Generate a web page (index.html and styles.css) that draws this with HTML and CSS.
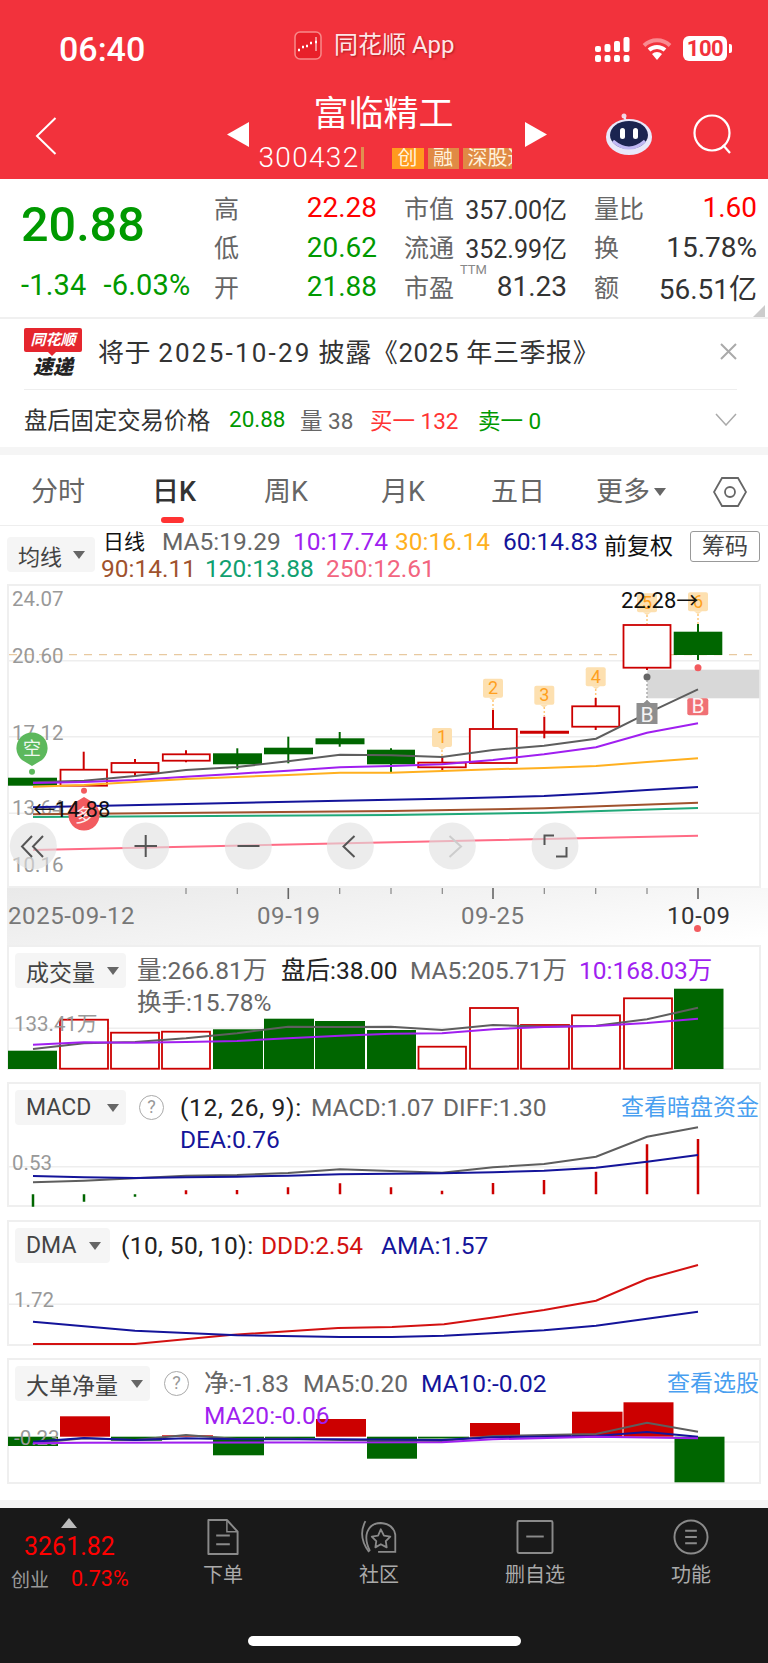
FILE: index.html
```html
<!DOCTYPE html>
<html lang="zh">
<head>
<meta charset="utf-8">
<title>富临精工</title>
<link rel="stylesheet" href="styles.css">
</head>
<body>
<div class="page">
  <header class="header">
    <div class="status">
      <span class="time">06:40</span>
      <div class="applabel">
        <svg class="applogo" viewBox="0 0 28 29"><rect x="1" y="1" width="26" height="27" rx="5" fill="#e8202a" stroke="#f78a8a" stroke-width="1.5"/><path d="M4 19h2M8 16h2M12 15h2M16 12h2M21 11h2" stroke="#fff" stroke-width="2.4"/><path d="M22 6v14" stroke="#fff" stroke-width="1"/></svg>
        <span class="appname">同花顺 App</span>
      </div>
      <div class="sysicons">
        <svg class="signal" viewBox="0 0 35 25"><g fill="#fff"><rect x="0" y="18" width="6" height="7" rx="2"/><rect x="9.500" y="18" width="6" height="7" rx="2"/><rect x="19" y="18" width="6" height="7" rx="2"/><rect x="28.500" y="18" width="6" height="7" rx="2"/><rect x="0" y="9" width="6" height="6" rx="2"/><rect x="9.500" y="7" width="6" height="8" rx="2"/><rect x="19" y="4" width="6" height="11" rx="2"/><rect x="28.500" y="0" width="6" height="15" rx="2"/></g></svg>
        <svg class="wifi" viewBox="0 0 30 24"><path d="M2 9.500a19 19 0 0 1 26 0" fill="none" stroke="#f98b91" stroke-width="4"/><path d="M7 14a12 12 0 0 1 16 0" fill="none" stroke="#fff" stroke-width="4"/><path d="M15 24l-5-6a7 7 0 0 1 10 0z" fill="#fff"/></svg>
        <div class="battery"><span class="batterytext">100</span></div>
      </div>
    </div>
    <div class="nav">
      <svg class="back" viewBox="0 0 22 38"><path d="M20.500 1L2 19l18.500 18" fill="none" stroke="#fff" stroke-width="2"/></svg>
      <svg class="tri-l" viewBox="0 0 22 25"><path d="M22 0v25L0 12.500z" fill="#fff"/></svg>
      <div class="navcenter">
        <div class="title">富临精工</div>
        <div class="coderow">
          <span class="code">300432</span><span class="codebar"></span>
          <span class="tag tag-a">创</span><span class="tag tag-b">融</span><span class="tag tag-c">深股通</span>
        </div>
      </div>
      <svg class="tri-r" viewBox="0 0 22 25"><path d="M0 0v25l22-12.500z" fill="#fff"/></svg>
      <svg class="robot" viewBox="0 0 48 42"><circle cx="19" cy="3" r="2.500" fill="#f4d4e4"/><path d="M19 4q1 3 4 4" stroke="#e8e8f8" stroke-width="2" fill="none"/><ellipse cx="24" cy="24" rx="23" ry="18" fill="#e8e8fa"/><ellipse cx="24" cy="22" rx="19" ry="14" fill="#1b2450"/><path d="M8 28q16 14 32 0" stroke="#c0b8f4" stroke-width="3" fill="none"/><rect x="15" y="15" width="5" height="11" rx="2.500" fill="#fff"/><rect x="28" y="15" width="5" height="11" rx="2.500" fill="#fff"/></svg>
      <svg class="search" viewBox="0 0 40 40"><circle cx="19" cy="19" r="17.500" fill="none" stroke="#fff" stroke-width="2.200"/><path d="M30 31l7 8" stroke="#fff" stroke-width="2.200"/></svg>
    </div>
  </header>

  <section class="quote">
    <div class="price">
      <div class="bigprice">20.88</div>
      <div class="change"><span>-1.34</span><span>-6.03%</span></div>
    </div>
    <div class="stats">
      <div class="stat"><span class="lab">高</span><span class="val up">22.28</span></div>
      <div class="stat"><span class="lab">市值</span><span class="val small dark">357.00亿</span></div>
      <div class="stat"><span class="lab">量比</span><span class="val up">1.60</span></div>
      <div class="stat"><span class="lab">低</span><span class="val down">20.62</span></div>
      <div class="stat"><span class="lab">流通</span><span class="val small dark">352.99亿</span></div>
      <div class="stat"><span class="lab">换</span><span class="val dark">15.78%</span></div>
      <div class="stat"><span class="lab">开</span><span class="val down">21.88</span></div>
      <div class="stat"><span class="lab">市盈<span class="ttm">TTM</span></span><span class="val dark">81.23</span></div>
      <div class="stat"><span class="lab">额</span><span class="val dark">56.51亿</span></div>
    </div>
    <span class="corner"></span>
  </section>

  <section class="noticebox">
    <div class="notice">
      <div class="nlogo"><div class="nlogo-tag">同花顺</div><div class="nlogo-sub">速递</div></div>
      <div class="ntext">将于 <span class="nnum">2025-10-29</span> 披露《2025 年三季报》</div>
      <svg class="nclose" viewBox="0 0 17 17"><path d="M1 1l15 15M16 1L1 16" stroke="#aaa" stroke-width="2"/></svg>
    </div>
    <div class="after">
      <span class="after-lab">盘后固定交易价格</span>
      <span class="after-price">20.88</span>
      <span class="after-vol">量 38</span>
      <span class="after-buy">买一 132</span>
      <span class="after-sell">卖一 0</span>
      <svg class="after-more" viewBox="0 0 22 13"><path d="M1 1l10 11L21 1" fill="none" stroke="#aaa" stroke-width="1.500"/></svg>
    </div>
  </section>

  <nav class="tabs">
    <span class="tab t1">分时</span>
    <span class="tab t2 active">日K</span>
    <span class="tab t3">周K</span>
    <span class="tab t4">月K</span>
    <span class="tab t5">五日</span>
    <span class="tab t6">更多<i class="caret"></i></span>
    <svg class="hex" viewBox="0 0 34 30"><path d="M9 1h16l8 14-8 14H9L1 15z" fill="none" stroke="#666" stroke-width="1.800"/><circle cx="17" cy="15" r="5" fill="none" stroke="#666" stroke-width="1.800"/></svg>
  </nav>

  <section class="klegend">
    <div class="pill pill-ma"><span>均线</span><i class="caret"></i></div>
    <div class="klines">
      <div class="krow">
        <span class="kname">日线</span><span class="gray">MA5:19.29</span><span class="purple">10:17.74</span><span class="orange">30:16.14</span><span class="navy">60:14.83</span>
      </div>
      <div class="krow krow2">
        <span class="brown">90:14.11</span><span class="teal">120:13.88</span><span class="pink">250:12.61</span>
      </div>
    </div>
    <span class="fq">前复权</span>
    <span class="chip">筹码</span>
  </section>

  <section class="panel kpanel">
    <svg class="chart" viewBox="9 586 750 300">
      <path class="grid" d="M9 660.700H759M9 736.700H759M9 813.300H759"/>
      <path class="dash" d="M9 654.700H759"/>
      <text class="axis" x="12" y="606">24.07</text>
      <text class="axis" x="12" y="663">20.60</text>
      <text class="axis" x="12" y="740">17.12</text>
      <text class="axis" x="12" y="815">13.64</text>
      <text class="axis" x="12" y="872">10.16</text>
      <rect x="647.300" y="669.700" width="112" height="28.600" fill="#d8d8d8"/>

      <g class="gc">
        <rect x="8" y="777.700" width="49" height="8"/><rect x="213" y="753.300" width="49" height="11"/><path class="gw" d="M237.300 748.300V769.300"/>
        <rect x="264" y="747.700" width="49" height="6.600"/><path class="gw" d="M288.300 736.700V763.300"/>
        <rect x="315.500" y="738.300" width="49" height="6"/><path class="gw" d="M339.700 732V746.700"/>
        <rect x="367" y="749.700" width="48" height="14.600"/><path class="gw" d="M391 748.300V772.300"/>
        <rect x="673.700" y="631.700" width="48.600" height="23.300"/><path class="gw" d="M698 624V660"/>
      </g>
      <g class="rc">
        <path d="M83.700 751.700V769.300"/><rect x="60.500" y="769.700" width="46.500" height="16"/>
        <path d="M135 759V762.700M135 772.300V776"/><rect x="111.500" y="763" width="47" height="9.300"/>
        <path d="M186 750.300V754M186 760.700V762.300"/><rect x="162.800" y="754.300" width="47" height="6.400"/>
        <path d="M442.300 756.700V762.300M442.300 767.300V771"/><rect x="418.200" y="762.600" width="47.600" height="4.700"/>
        <path d="M493 710V728.700"/><rect x="469.800" y="729" width="47" height="34"/>
        <path class="thick" d="M520 732.300H569"/><path d="M544.300 716.700V738.300"/>
        <path d="M595.700 698V706M595.700 726.700V730"/><rect x="572.200" y="706.300" width="47" height="20.400"/>
        <path d="M647 667.700V670"/><rect x="623.500" y="625" width="47" height="42.700"/>
      </g>

      <polyline class="ln ma5" points="33,782.300 84,780.700 135,776 186,770 237,767 288,761.300 340,754.700 391,755.300 442,757 493,750 544,745.700 596,738.700 647,713.300 698,689.300"/>
      <polyline class="ln ma10" points="33,783 84,782 135,780 186,776.700 237,773.700 288,770.700 340,767.300 391,766 442,764.300 493,760 544,754.300 596,747.300 647,732.700 698,723.300"/>
      <polyline class="ln ma30" points="33,786.700 84,785 186,779 288,775 340,772.700 391,772.700 442,771 493,769.300 544,768 596,766 647,762 698,758.300"/>
      <polyline class="ln ma60" points="33,807.300 186,804 340,800.700 442,798.700 544,796 596,793.300 647,790 698,787"/>
      <polyline class="ln ma90" points="33,814.300 391,811 544,808.300 698,802.700"/>
      <polyline class="ln ma120" points="33,817 391,815 544,812.700 698,808"/>
      <polyline class="ln ma250" points="33,850 346,843.300 698,835.700"/>

      <g class="marks">
        <g><rect x="432" y="728" width="20" height="19" rx="2"/><path d="M438 747h8l-4 3z"/><path class="dot-l" d="M442 750V756"/><text x="442" y="743">1</text></g>
        <g><rect x="483" y="678.700" width="20" height="19" rx="2"/><path d="M489 697.700h8l-4 3z"/><path class="dot-l" d="M493 700V710"/><text x="493" y="694">2</text></g>
        <g><rect x="534.300" y="685.700" width="20" height="19" rx="2"/><path d="M540 704.700h8l-4 3z"/><path class="dot-l" d="M544.300 707V716"/><text x="544.300" y="701">3</text></g>
        <g><rect x="585.700" y="667.300" width="20" height="19" rx="2"/><path d="M592 686.300h8l-4 3z"/><path class="dot-l" d="M595.700 689V698"/><text x="595.700" y="682.500">4</text></g>
        <g><rect x="637" y="593.300" width="20" height="19" rx="2"/><path d="M643 612.300h8l-4 3z"/><path class="dot-l" d="M647 615V624"/><text x="647" y="608.500">5</text></g>
        <g><rect x="688" y="592.300" width="20" height="19" rx="2"/><path d="M694 611.300h8l-4 3z"/><path class="dot-l" d="M698 614V624"/><text x="698" y="607.500">6</text></g>
      </g>

      <circle cx="647" cy="677" r="3.500" fill="#666"/>
      <path d="M647 680V702" stroke="#999" stroke-dasharray="2 2" stroke-width="1.200"/>
      <path d="M636.500 703h7l3.500-3 3.500 3h7v21h-21z" fill="#8e8e8e"/>
      <text class="btag" x="647" y="722">B</text>
      <circle cx="698" cy="667.700" r="3.500" fill="#f25b5f"/>
      <rect x="687.300" y="698.300" width="21" height="17" rx="2" fill="#f07075"/>
      <text class="btag" x="698" y="713">B</text>

      <path d="M32 766L22 760a15.600 15.600 0 1 1 20 0z" fill="#5cb85c"/>
      <circle cx="32" cy="771.700" r="3" fill="#5cb85c"/>
      <text class="pintext" x="32" y="755">空</text>
      <circle cx="84" cy="790.700" r="3" fill="#f25b5f"/>
      <path d="M84 797L94 803a15.600 15.600 0 1 1-20 0z" fill="#f25b5f"/>
      <text class="pintext" x="84" y="822">多</text>

      <text class="extreme" x="33" y="817">←14.88</text>
      <text class="extreme" x="621" y="608">22.28→</text>

      <g class="ctl">
        <circle cx="33.300" cy="846" r="23.500"/><circle cx="145.700" cy="846" r="23.500"/><circle cx="248.300" cy="846" r="23.500"/><circle cx="350.300" cy="846" r="23.500"/><circle cx="452.300" cy="846" r="23.500"/><circle cx="555" cy="846" r="23.500"/>
      </g>
      <g class="ctlicon">
        <path d="M32 836L22 846.500 32 857M43 836L33 846.500 43 857"/>
        <path d="M134.500 846H157M145.700 835V857"/>
        <path d="M237.500 846H259.500"/>
        <path d="M354.500 836L343.500 846.500 354.500 857"/>
        <path class="off" d="M449.500 836L461 846.500 449.500 857"/>
        <path d="M554 835.500H544.500V845M556 856.500H566.500V847"/>
      </g>
    </svg>
  </section>

  <section class="timeaxis">
    <svg class="ticks" viewBox="0 0 768 14"><path d="M186 0v6M237.300 0v6M339.700 0v6M391 0v6M442.300 0v6M544.300 0v6M595.700 0v6M647 0v6" stroke="#888" stroke-width="1.200"/><path d="M288.300 0v11M493 0v11M698 0v11" stroke="#666" stroke-width="1.600"/></svg>
    <div class="dates">
      <span class="date d1">2025-09-12</span>
      <span class="date d2">09-19</span>
      <span class="date d3">09-25</span>
      <span class="date d4">10-09</span>
    </div>
    <i class="reddot"></i>
  </section>

  <section class="panel sub h125">
    <svg class="chart" viewBox="9 947 750 121">
      <path class="grid" d="M9 1028.300H759"/>
      <g class="gb">
        <rect x="8" y="1050.700" width="49" height="18.300"/><rect x="213" y="1029.300" width="50" height="39.700"/><rect x="264" y="1018.700" width="50" height="50.300"/><rect x="315" y="1021" width="50" height="48"/><rect x="367" y="1030" width="49" height="39"/><rect x="674" y="988.700" width="49.500" height="80.300"/>
      </g>
      <g class="rb">
        <rect x="60" y="1019.700" width="48" height="49"/><rect x="111" y="1032.700" width="48" height="36"/><rect x="162" y="1031.700" width="48" height="37"/><rect x="418.500" y="1046.700" width="47.500" height="22"/><rect x="470" y="1008" width="48" height="60.700"/><rect x="521" y="1025" width="48" height="43.700"/><rect x="572" y="1015.300" width="48" height="53.400"/><rect x="624" y="998.300" width="48" height="70.400"/>
      </g>
      <text class="axis" x="14" y="1031">133.41万</text>
      <polyline class="ln ma5" points="33,1049 84,1043.300 135,1042 186,1038.300 237,1033.300 288,1026.700 340,1027 391,1026.700 442,1030 493,1025 544,1026.700 596,1025.700 647,1019.300 698,1007.700"/>
      <polyline class="ln ma10" points="33,1044.700 84,1042.300 135,1042.700 186,1042 237,1041 288,1038.300 340,1035.700 391,1033.700 442,1033.300 493,1029.300 544,1027 596,1026 647,1023 698,1018.700"/>
    </svg>
    <div class="plegend">
      <div class="pill pill-vol"><span>成交量</span><i class="caret"></i></div>
      <div class="pvalues pv-vol">
        <div class="prow"><span class="gray">量:266.81万</span><span class="dark2">盘后:38.00</span><span class="gray">MA5:205.71万</span><span class="purple">10:168.03万</span></div>
        <div class="prow"><span class="gray">换手:15.78%</span></div>
      </div>
    </div>
  </section>

  <section class="panel sub h125 gap13">
    <svg class="chart" viewBox="9 1084 750 121">
      <path class="grid" d="M9 1166.700H759"/>
      <text class="axis" x="12" y="1170">0.53</text>
      <g class="mg"><path d="M33 1194.300V1206.700M84 1194.300V1201.700M135 1194.300V1196.700"/></g>
      <g class="mr"><path d="M186 1194.300V1190.300M237 1194.300V1190M288 1194.300V1187.300M340 1194.300V1183.300M391 1194.300V1187.300M442 1194.300V1190.700M493 1194.300V1183M544 1194.300V1180M596 1194.300V1171.700M647 1194.300V1144.300M698 1194.300V1139"/></g>
      <polyline class="ln ma5" points="33,1182.300 84,1180.700 135,1178.300 186,1175.700 237,1175 288,1173 340,1169.300 391,1171 442,1172.700 493,1167.300 544,1164 596,1156.700 647,1136.700 698,1127.300"/>
      <polyline class="ln ma60" points="33,1176 84,1177.300 135,1178 186,1177.300 237,1176.700 288,1175.700 340,1174.300 391,1173.700 442,1173.300 493,1172.300 544,1170.700 596,1167.700 647,1161.700 698,1155"/>
    </svg>
    <div class="plegend">
      <div class="pill pill-vol"><span>MACD</span><i class="caret"></i></div>
      <span class="help help-macd">?</span>
      <div class="pvalues pv-macd">
        <div class="prow"><span class="dark2">(12, 26, 9):</span><span class="gray">MACD:1.07</span><span class="gray">DIFF:1.30</span></div>
        <div class="prow"><span class="navy">DEA:0.76</span></div>
      </div>
    </div>
    <a class="plink">查看暗盘资金</a>
  </section>

  <section class="panel sub h126 gap13">
    <svg class="chart" viewBox="9 1222 750 122">
      <path class="grid" d="M9 1304.300H759"/>
      <text class="axis" x="14" y="1306.500">1.72</text>
      <polyline class="ln redl" points="33,1344 135,1344 230,1335 338,1328 392,1327 444,1324.300 495,1317.300 544,1310 596,1300.700 647,1279 698,1265"/>
      <polyline class="ln ma60" points="33,1321.700 135,1330.700 237,1335.300 340,1337 392,1337 444,1335.700 544,1330.300 596,1325.700 647,1318.700 698,1311.700"/>
    </svg>
    <div class="plegend">
      <div class="pill pill-dma"><span>DMA</span><i class="caret"></i></div>
      <div class="pvalues pv-dma">
        <div class="prow"><span class="dark2">(10, 50, 10):</span><span class="red">DDD:2.54</span><span class="navy">AMA:1.57</span></div>
      </div>
    </div>
  </section>

  <section class="panel sub h126 gap12">
    <svg class="chart" viewBox="9 1360 750 122">
      <path class="grid" d="M9 1442H759"/>
      <g class="gf">
        <rect x="8" y="1436.700" width="50" height="9.300"/><rect x="111" y="1436.700" width="51" height="4"/><rect x="213" y="1436.700" width="51" height="18.600"/><rect x="265" y="1436.700" width="50" height="1.500"/><rect x="367" y="1436.700" width="50" height="22"/><rect x="418" y="1436.700" width="51" height="1.800"/><rect x="674.500" y="1436.700" width="50" height="45.600"/>
      </g>
      <g class="rf">
        <rect x="60" y="1416.300" width="50" height="20.400"/><rect x="162" y="1435.300" width="51" height="1.400"/><rect x="316" y="1419" width="50" height="17.700"/><rect x="470" y="1423" width="50" height="13.700"/><rect x="521" y="1435" width="50" height="1.700"/><rect x="572" y="1411.700" width="50.500" height="25"/><rect x="623.500" y="1402.300" width="50" height="34.400"/>
      </g>
      <text class="axis" x="14" y="1445">-0.23</text>
      <polyline class="ln ma5" points="33,1443.300 84,1438.300 135,1440 186,1435 237,1439 288,1438.700 340,1440 442,1441 493,1436 544,1435 596,1434 647,1422.700 698,1431.700"/>
      <polyline class="ln ma60" points="33,1441.700 84,1438 135,1440 186,1438.300 237,1439.300 340,1439.300 442,1440 493,1437.300 596,1436 647,1432 698,1436.700"/>
      <polyline class="ln ma10" points="33,1443.300 84,1442.700 442,1442.300 493,1439.300 596,1436.700 698,1438.300"/>
    </svg>
    <div class="plegend">
      <div class="pill pill-big"><span>大单净量</span><i class="caret"></i></div>
      <span class="help help-big">?</span>
      <div class="pvalues pv-big">
        <div class="prow"><span class="gray">净:-1.83</span><span class="gray">MA5:0.20</span><span class="navy">MA10:-0.02</span></div>
        <div class="prow"><span class="purple">MA20:-0.06</span></div>
      </div>
    </div>
    <a class="plink">查看选股</a>
  </section>

  <div class="footgap"></div>

  <footer class="tabbar">
    <div class="index">
      <i class="idx-up"></i>
      <div class="idx-val">3261.82</div>
      <div class="idx-row"><span class="idx-name">创业</span><span class="idx-pct">0.73%</span></div>
    </div>
    <div class="bar-item">
      <svg class="bar-icon" viewBox="0 0 36 37"><path d="M3 1h19l11 12v23H3z" fill="none" stroke="#8a8a8a" stroke-width="2" stroke-linejoin="round"/><path d="M22 1v12h11" fill="none" stroke="#8a8a8a" stroke-width="1.500"/><path d="M11 17h14M11 26h14" stroke="#8a8a8a" stroke-width="2"/></svg>
      <span>下单</span>
    </div>
    <div class="bar-item">
      <svg class="bar-icon" viewBox="0 0 42 37"><path d="M6 1Q-3 18 10 35" fill="none" stroke="#8a8a8a" stroke-width="2"/><path d="M11 34Q5 22 8 13Q12 3 23 3Q37 4 39 16V35H20" fill="none" stroke="#8a8a8a" stroke-width="2"/><path d="M23 10l3.500 7 7 1-5 5 1 7-6.500-3.500L17 30l1-7-5-5 7-1z" fill="none" stroke="#8a8a8a" stroke-width="2" stroke-linejoin="round"/></svg>
      <span>社区</span>
    </div>
    <div class="bar-item">
      <svg class="bar-icon" viewBox="0 0 38 37"><rect x="1" y="2" width="36" height="33" rx="1.500" fill="none" stroke="#8a8a8a" stroke-width="2"/><path d="M10 18h18" stroke="#8a8a8a" stroke-width="2"/></svg>
      <span>删自选</span>
    </div>
    <div class="bar-item">
      <svg class="bar-icon" viewBox="0 0 36 37"><circle cx="18" cy="18.500" r="17" fill="none" stroke="#8a8a8a" stroke-width="2"/><path d="M12 12h12M12 18.500h12M12 25h12" stroke="#8a8a8a" stroke-width="2"/></svg>
      <span>功能</span>
    </div>
    <i class="homebar"></i>
  </footer>
</div>
</body>
</html>
```
FILE: styles.css
```css
* { box-sizing: border-box; }
html, body { margin: 0; padding: 0; background: #fff; }
body { font-family: Roboto, "Noto Sans CJK SC", sans-serif; color: #333; }
.page { width: 768px; height: 1663px; overflow: hidden; position: relative; }
i { font-style: normal; display: block; }
svg { display: block; }

/* header */
.header { height: 179px; background: #f2323c; color: #fff; }
.status { height: 94px; display: flex; align-items: flex-start; }
.time { font-size: 34px; font-weight: 500; line-height: 40px; margin: 29px 0 0 59px; width: 235px; }
.applabel { display: flex; align-items: center; width: 301px; margin-top: 30px; }
.applogo { width: 28px; height: 29px; }
.appname { font-size: 24px; line-height: 30px; margin-left: 12px; color: #fff; opacity: .88; text-shadow: 1px 1px 2px rgba(90,0,0,.5); }
.sysicons { display: flex; align-items: flex-start; margin-top: 36px; }
.signal { width: 35px; height: 25px; margin-top: 1px; }
.wifi { width: 30px; height: 24px; margin-left: 12px; }
.battery { width: 44px; height: 25px; background: #fff; border-radius: 6px; margin-left: 11px; position: relative; display: flex; align-items: center; justify-content: center; }
.battery::after { content: ""; position: absolute; right: -5px; top: 8px; width: 3px; height: 9px; border-radius: 0 2px 2px 0; background: #fff; }
.batterytext { font-size: 22px; font-weight: 700; color: #f2323c; line-height: 25px; letter-spacing: -.5px; }
.nav { height: 85px; display: flex; align-items: flex-start; }
.back { width: 22px; height: 38px; margin: 23px 0 0 35px; }
.tri-l { width: 22px; height: 25px; margin: 28px 0 0 169.500px; }
.navcenter { width: 276px; }
.title { font-size: 35px; line-height: 42px; text-align: center; padding-right: 6px; }
.coderow { display: flex; align-items: center; margin-top: 11px; padding-left: 10px; height: 22px; }
.code { font-size: 28px; font-weight: 300; letter-spacing: 1.300px; line-height: 22px; width: 102px; }
.codebar { width: 3px; height: 22px; background: #e09050; margin-right: 28px; }
.tag { height: 21px; line-height: 21px; font-size: 20px; color: #fff2dc; text-align: center; overflow: hidden; white-space: nowrap; }
.tag-a { width: 32px; background: #ff9a1e; margin-right: 4px; }
.tag-b { width: 31px; background: #e08a45; margin-right: 4px; }
.tag-c { width: 49px; background: #e08a45; text-align: left; padding-left: 5px; }
.tri-r { width: 22px; height: 25px; margin-top: 28px; }
.robot { width: 48px; height: 42px; margin: 19px 0 0 58px; }
.search { width: 40px; height: 40px; margin: 20px 0 0 40px; }

/* quote */
.quote { display: flex; position: relative; border-bottom: 2px solid #f0f0f0; height: 140px; }
.price { width: 214px; padding: 16px 0 0 21px; }
.bigprice { font-size: 48.500px; font-weight: 500; line-height: 60px; color: #090; }
.change { display: flex; gap: 17px; font-size: 29px; letter-spacing: .2px; line-height: 30px; color: #090; margin-top: 15px; }
.stats { display: grid; grid-template-columns: repeat(3, 163px); column-gap: 27px; grid-auto-rows: 39.500px; padding-top: 9px; }
.stat { display: flex; justify-content: space-between; align-items: center; }
.lab { font-size: 25px; color: #666; position: relative; top: -1px; }
.ttm { position: absolute; left: 56px; top: -6px; font-size: 13px; color: #888; }
.val { font-size: 28px; }
.val.small { font-size: 25px; }
.up { color: #f00; }
.down { color: #090; }
.dark { color: #333; }
.corner { position: absolute; right: 3px; bottom: 0; width: 0; height: 0; border-left: 12px solid transparent; border-bottom: 12px solid #ccc; }

/* notice */
.noticebox { height: 128px; }
.notice { height: 71px; margin: 0 31px 0 24px; border-bottom: 1.500px solid #eee; display: flex; align-items: center; position: relative; }
.notice::after { content: ""; position: absolute; left: -24px; width: 8px; bottom: -1.500px; height: 1.500px; background: #fff; }
.nlogo { width: 58px; height: 50px; margin-right: 18px; margin-top: -2px; }
.nlogo-tag { background: #e5262e; color: #fff; font-size: 15px; font-weight: 700; font-style: italic; line-height: 24px; height: 24px; text-align: center; border-radius: 2px; position: relative; }
.nlogo-tag::after { content: ""; position: absolute; left: 24px; bottom: -4px; width: 0; height: 0; border-left: 4px solid transparent; border-right: 4px solid transparent; border-top: 4px solid #e5262e; }
.nlogo-sub { font-size: 20px; font-weight: 900; font-style: italic; line-height: 24px; color: #222; text-align: center; padding-top: 3px; }
.ntext { font-size: 26px; letter-spacing: .6px; color: #333; flex: 1; line-height: 34px; margin-top: -2px; white-space: nowrap; margin-left: -2px; }
.nnum { letter-spacing: 2.200px; }
.nclose { width: 17px; height: 17px; margin-top: -5px; }
.after { height: 57px; display: flex; align-items: center; padding: 1px 31px 0 24px; font-size: 22.500px; }
.after-lab { color: #333; font-size: 23.300px; width: 205px; }
.after-price { color: #090; width: 71px; font-size: 22.500px; }
.after-vol { color: #666; width: 70px; }
.after-buy { color: #f33; width: 108px; }
.after-sell { color: #090; flex: 1; }
.after-more { width: 22px; height: 13px; }

/* tabs */
.tabs { height: 79px; border-top: 8px solid #f5f5f5; border-bottom: 1px solid #eee; position: relative; display: flex; align-items: center; padding-top: 3px; }
.tab { font-size: 27px; color: #666; line-height: 34px; }
.t1 { margin-left: 31px; width: 121px; }
.t2 { width: 112px; color: #333; font-weight: 500; position: relative; }
.active::after { content: ""; position: absolute; left: 9px; top: 42px; width: 23px; height: 6px; border-radius: 3px; background: #f33; }
.t3 { width: 117px; }
.t4 { width: 110px; }
.t5 { width: 105px; }
.t6 { width: 117px; display: flex; align-items: center; }
.caret { width: 0; height: 0; border-left: 6px solid transparent; border-right: 6px solid transparent; border-top: 8px solid #666; }
.t6 .caret { margin-left: 4px; }
.hex { width: 34px; height: 30px; }

/* kline legend */
.klegend { height: 58px; display: flex; position: relative; padding-left: 7px; }
.pill { display: flex; align-items: center; background: #f5f5f5; border-radius: 4px; color: #444; font-size: 23px; }
.pill .caret { border-left-width: 6px; border-right-width: 6px; border-top-width: 8px; }
.pill-ma { width: 88px; height: 35px; margin-top: 11px; padding-left: 11px; font-size: 22px; }
.pill-ma .caret { margin-left: 11px; }
.klines { width: 508px; margin-left: 8px; font-size: 24.500px; line-height: 30px; padding-top: 1px; }
.krow { display: flex; white-space: nowrap; }
.kname { color: #111; font-size: 21px; width: 59px; }
.krow span:nth-child(2) { width: 131px; }
.krow span:nth-child(3) { width: 102px; }
.krow span:nth-child(4) { width: 108px; }
.krow2 { margin-left: -2px; margin-top: -3px; }
.krow2 span:nth-child(1) { width: 104px; }
.krow2 span:nth-child(2) { width: 121px; }
.krow2 span:nth-child(3) { width: auto; }
.gray { color: #666; }
.purple { color: #a01ff0; }
.orange { color: #ffb020; }
.navy { color: #14149a; }
.brown { color: #a0522d; }
.teal { color: #10a070; }
.pink { color: #f2657f; }
.red { color: #d31111; }
.dark2 { color: #222; }
.fq { font-size: 23px; color: #111; margin-left: -7px; margin-top: 5px; line-height: 32px; width: 86px; }
.chip { width: 70px; height: 31px; border: 1px solid #999; border-radius: 3px; font-size: 23px; line-height: 29px; text-align: center; color: #444; margin-top: 5px; }

/* panels */
.panel { margin: 0 7px; border: 2px solid #efefef; position: relative; width: 754px; }
.kpanel { height: 304px; }
.chart { width: 750px; height: 100%; overflow: visible; }
.kpanel .chart { height: 300px; }
.h125 { height: 125px; }
.h125 .chart { height: 121px; }
.h126 { height: 126px; }
.h126 .chart { height: 122px; }
.gap13 { margin-top: 12px; }
.h126.gap13 { margin-top: 13px; }
.gap12 { margin-top: 12px; }
.grid { stroke: #eee; stroke-width: 1.500; fill: none; }
.dash { stroke: #e8c9a0; stroke-width: 1.200; stroke-dasharray: 8 7; fill: none; }
.axis { font-family: Roboto, "Noto Sans CJK SC", sans-serif; font-size: 20.500px; fill: #999; }
.gc rect { fill: #060; }
.gw { stroke: #060; stroke-width: 2; }
.rc path { stroke: #c00; stroke-width: 2; fill: none; }
.rc path.thick { stroke-width: 3; }
.rc rect { fill: #fff; stroke: #c00; stroke-width: 1.800; }
.gb rect { fill: #060; }
.rb rect { fill: #fff; stroke: #c00; stroke-width: 1.800; }
.mg path { stroke: #060; stroke-width: 2.500; fill: none; }
.mr path { stroke: #c00; stroke-width: 2.500; fill: none; }
.gf rect { fill: #060; }
.rf rect { fill: #c00; }
.ln { fill: none; stroke-width: 2; }
.ma5 { stroke: #5e5e5e; }
.ma10 { stroke: #a01ff0; }
.ma30 { stroke: #ffb020; }
.ma60 { stroke: #14149a; }
.ma90 { stroke: #a0522d; }
.ma120 { stroke: #20a878; }
.ma250 { stroke: #ff6b85; }
.redl { stroke: #d31111; }
.marks rect, .marks > g > path { fill: #fde0b0; }
.marks .dot-l { stroke: #ffc878; stroke-width: 1.500; stroke-dasharray: 2 2; fill: none; }
.marks text { font-family: Roboto, sans-serif; font-size: 18px; fill: #ffa020; text-anchor: middle; }
.btag { font-family: Roboto, sans-serif; font-size: 21px; fill: #fff; text-anchor: middle; opacity: .9; }
.pintext { font-family: "Noto Sans CJK SC", sans-serif; font-size: 18px; fill: #fff; text-anchor: middle; opacity: .9; }
.extreme { font-family: Roboto, "Noto Sans CJK SC", sans-serif; font-size: 22px; fill: #111; }
.ctl circle { fill: rgba(225,225,225,.62); }
.ctlicon path { fill: none; stroke: #555; stroke-width: 2; }
.ctlicon path.off { stroke: #ccc; }

/* time axis */
.timeaxis { height: 57px; margin-left: 7px; position: relative; background: linear-gradient(172deg, #e9e9e9 0, #f5f5f5 55%, #fff 95%); }
.ticks { width: 768px; height: 14px; margin-left: -7px; }
.dates { display: flex; height: 30px; align-items: center; margin-top: -1px; }
.date { font-size: 24px; color: #777; white-space: nowrap; letter-spacing: .6px; }
.d1 { margin-left: 1px; width: 249px; }
.d2 { width: 204px; }
.d3 { width: 206px; }
.d4 { color: #333; }
.reddot { position: absolute; left: 687px; top: 37px; width: 7px; height: 7px; border-radius: 50%; background: #f25b5f; }

/* sub panels */
.plegend { position: absolute; left: 6px; top: 6px; display: flex; align-items: flex-start; }
.pill-vol { width: 111px; height: 35px; padding-left: 11px; }
.pill-vol span { width: 81px; }
.pill-dma { width: 95px; height: 35px; padding-left: 11px; }
.pill-dma span { width: 63px; }
.pill-big { width: 135px; height: 35px; padding-left: 11px; }
.pill-big span { width: 105px; }
.pvalues { font-size: 24.500px; line-height: 32px; white-space: nowrap; }
.prow { display: flex; }
.pv-vol { margin-left: 11px; margin-top: 2px; }
.pv-vol .prow span:nth-child(1) { width: 144px; }
.pv-vol .prow span:nth-child(2) { width: 129px; }
.pv-vol .prow span:nth-child(3) { width: 169px; }
.pv-vol .prow:last-child span:nth-child(1) { width: auto; }
.help { width: 25px; height: 25px; border: 1.500px solid #aaa; border-radius: 50%; font-size: 18px; line-height: 22px; text-align: center; color: #999; margin-top: 5px; }
.help-macd { margin-left: 13px; }
.help-big { margin-left: 14px; }
.pv-macd { margin-left: 16px; margin-top: 2px; }
.pv-macd .prow span:nth-child(1) { width: 131px; letter-spacing: .7px; }
.pv-macd .prow span:nth-child(2) { width: 132px; }
.pv-macd .prow:last-child span:nth-child(1) { width: auto; letter-spacing: 0; }
.pv-dma { margin-left: 11px; margin-top: 2px; }
.pv-dma .prow span:nth-child(1) { width: 140px; letter-spacing: .4px; }
.pv-dma .prow span:nth-child(2) { width: 120px; }
.pv-big { margin-left: 15px; margin-top: 2px; }
.pv-big .prow span:nth-child(1) { width: 99px; }
.pv-big .prow span:nth-child(2) { width: 118px; }
.pv-big .prow:last-child span:nth-child(1) { width: auto; }
.plink { position: absolute; right: 0; top: 8px; font-size: 23px; line-height: 32px; color: #4a9ff0; }

/* bottom */
.footgap { height: 24px; background: linear-gradient(#fff 0, #fff 16px, #f4f4f4 16px); }
.tabbar { height: 155px; background: #191919; display: grid; grid-template-columns: 145px repeat(4, 156px); position: relative; overflow: hidden; }
.index { position: relative; }
.idx-up { width: 0; height: 0; border-left: 8.500px solid transparent; border-right: 8.500px solid transparent; border-bottom: 10px solid #bbb; margin: 10px 0 0 61px; }
.idx-val { font-size: 25px; color: #f00; line-height: 30px; margin: 4px 0 0 24px; }
.idx-row { display: flex; align-items: center; margin: 1px 0 0 11px; height: 30px; }
.idx-name { font-size: 19px; color: #999; width: 60px; }
.idx-pct { font-size: 21.500px; color: #f00; }
.bar-item { display: flex; flex-direction: column; align-items: center; padding-top: 11px; color: #aaa; font-size: 20px; }
.bar-icon { width: 38px; height: 36px; }
.bar-item span { line-height: 24px; margin-top: 8px; }
.homebar { position: absolute; left: 247.500px; top: 128px; width: 273.500px; height: 10px; border-radius: 5px; background: #fff; }
```
